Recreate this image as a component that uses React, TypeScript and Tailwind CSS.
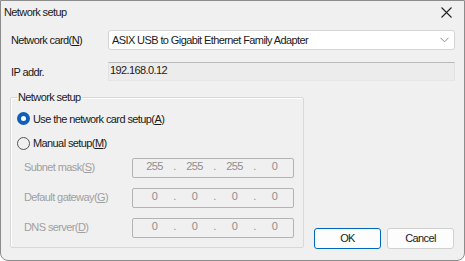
import React from "react";

function IpField({ values }: { values: string[] }) {
  return (
    <div className="ml-auto flex h-[20px] w-[162px] items-center rounded-[2px] border border-[#b4b4b4] bg-[#f0f0f0] pb-[3px] pl-[6px] text-[#8f8f8f]">
      {values.map((v, i) => (
        <React.Fragment key={i}>
          <span className="w-[31px] text-center">{v}</span>
          {i < 3 && <span className="w-[9px] text-center">.</span>}
        </React.Fragment>
      ))}
    </div>
  );
}

function Row({ label, u, values }: { label: string; u: string; values: string[] }) {
  return (
    <div className="flex h-[20px] items-center pl-[13px] pr-[9px] text-[#a0a0a0]">
      <span>
        {label}(<span className="underline">{u}</span>)
      </span>
      <IpField values={values} />
    </div>
  );
}

export default function App() {
  return (
    <div
      className="flex h-[261px] w-[465px] flex-col overflow-hidden rounded-b-[8px] border border-[#8c8c8c] bg-[#f0f0f0] text-[11px] tracking-[-0.6px] text-[#1a1a1a]"
      style={{ fontFamily: '"Liberation Sans", Arial, sans-serif' }}
    >
      <div className="flex h-[22px] items-center justify-between pl-[3px] pr-[12px]">
        <span>Network setup</span>
        <svg width="11" height="11" viewBox="0 0 11 11" className="mt-[1px]">
          <path d="M0.5 0.5 L10.5 10.5 M10.5 0.5 L0.5 10.5" stroke="#222" strokeWidth="1.1" />
        </svg>
      </div>
      <div className="flex flex-col px-[9px]">
        <div className="mt-[7px] flex items-center">
          <span className="w-[98px] pl-[1px]">
            Network card(<span className="underline">N</span>)
          </span>
          <div className="flex h-[20px] flex-1 items-center justify-between rounded-[3px] border border-[#d4d4d4] bg-white pl-[3px] pr-[5px]">
            <span>ASIX USB to Gigabit Ethernet Family Adapter</span>
            <svg width="9" height="6" viewBox="0 0 9 6">
              <path d="M0.5 0.8 L4.5 4.8 L8.5 0.8" fill="none" stroke="#8a8a8a" strokeWidth="1" />
            </svg>
          </div>
        </div>
        <div className="mt-[12px] flex items-center">
          <span className="w-[98px] pl-[1px] pt-[2px]">IP addr.</span>
          <div className="flex h-[19px] flex-1 items-start border border-t-[#b9b9b9] border-x-[#e2e2e2] border-b-[#e6e6e6] bg-[#ececec] pl-[1px]">
            <span className="leading-[14px]">192.168.0.12</span>
          </div>
        </div>
        <div className="mt-[8px] flex items-end gap-[10px]">
          <fieldset className="h-[159px] w-[294px] rounded-[2px] border border-[#d8d8d8] shadow-[inset_1px_1px_0_#ffffff]">
            <legend className="ml-[6px] px-[1px]">Network setup</legend>
            <div className="mt-[5px] flex items-center gap-[3px] pl-[6px]">
              <span className="flex h-[13px] w-[13px] items-center justify-center rounded-full bg-[#0f5fb8]">
                <span className="h-[5px] w-[5px] rounded-full bg-white" />
              </span>
              <span>
                Use the network card setup(<span className="underline">A</span>)
              </span>
            </div>
            <div className="mt-[8px] flex items-center gap-[3px] pl-[6px]">
              <span className="h-[13px] w-[13px] rounded-full border border-[#555]" />
              <span>
                Manual setup(<span className="underline">M</span>)
              </span>
            </div>
            <div className="mt-[6px] flex flex-col gap-[10px]">
              <Row label="Subnet mask" u="S" values={["255", "255", "255", "0"]} />
              <Row label="Default gateway" u="G" values={["0", "0", "0", "0"]} />
              <Row label="DNS server" u="D" values={["0", "0", "0", "0"]} />
            </div>
          </fieldset>
          <div className="mb-[-1px] flex gap-[6px]">
            <button className="h-[21px] w-[67px] rounded-[3px] border border-[#0067c0] bg-[#fdfdfd]">OK</button>
            <button className="h-[21px] w-[67px] rounded-[3px] border border-[#d0d0d0] bg-[#fdfdfd]">Cancel</button>
          </div>
        </div>
      </div>
    </div>
  );
}
